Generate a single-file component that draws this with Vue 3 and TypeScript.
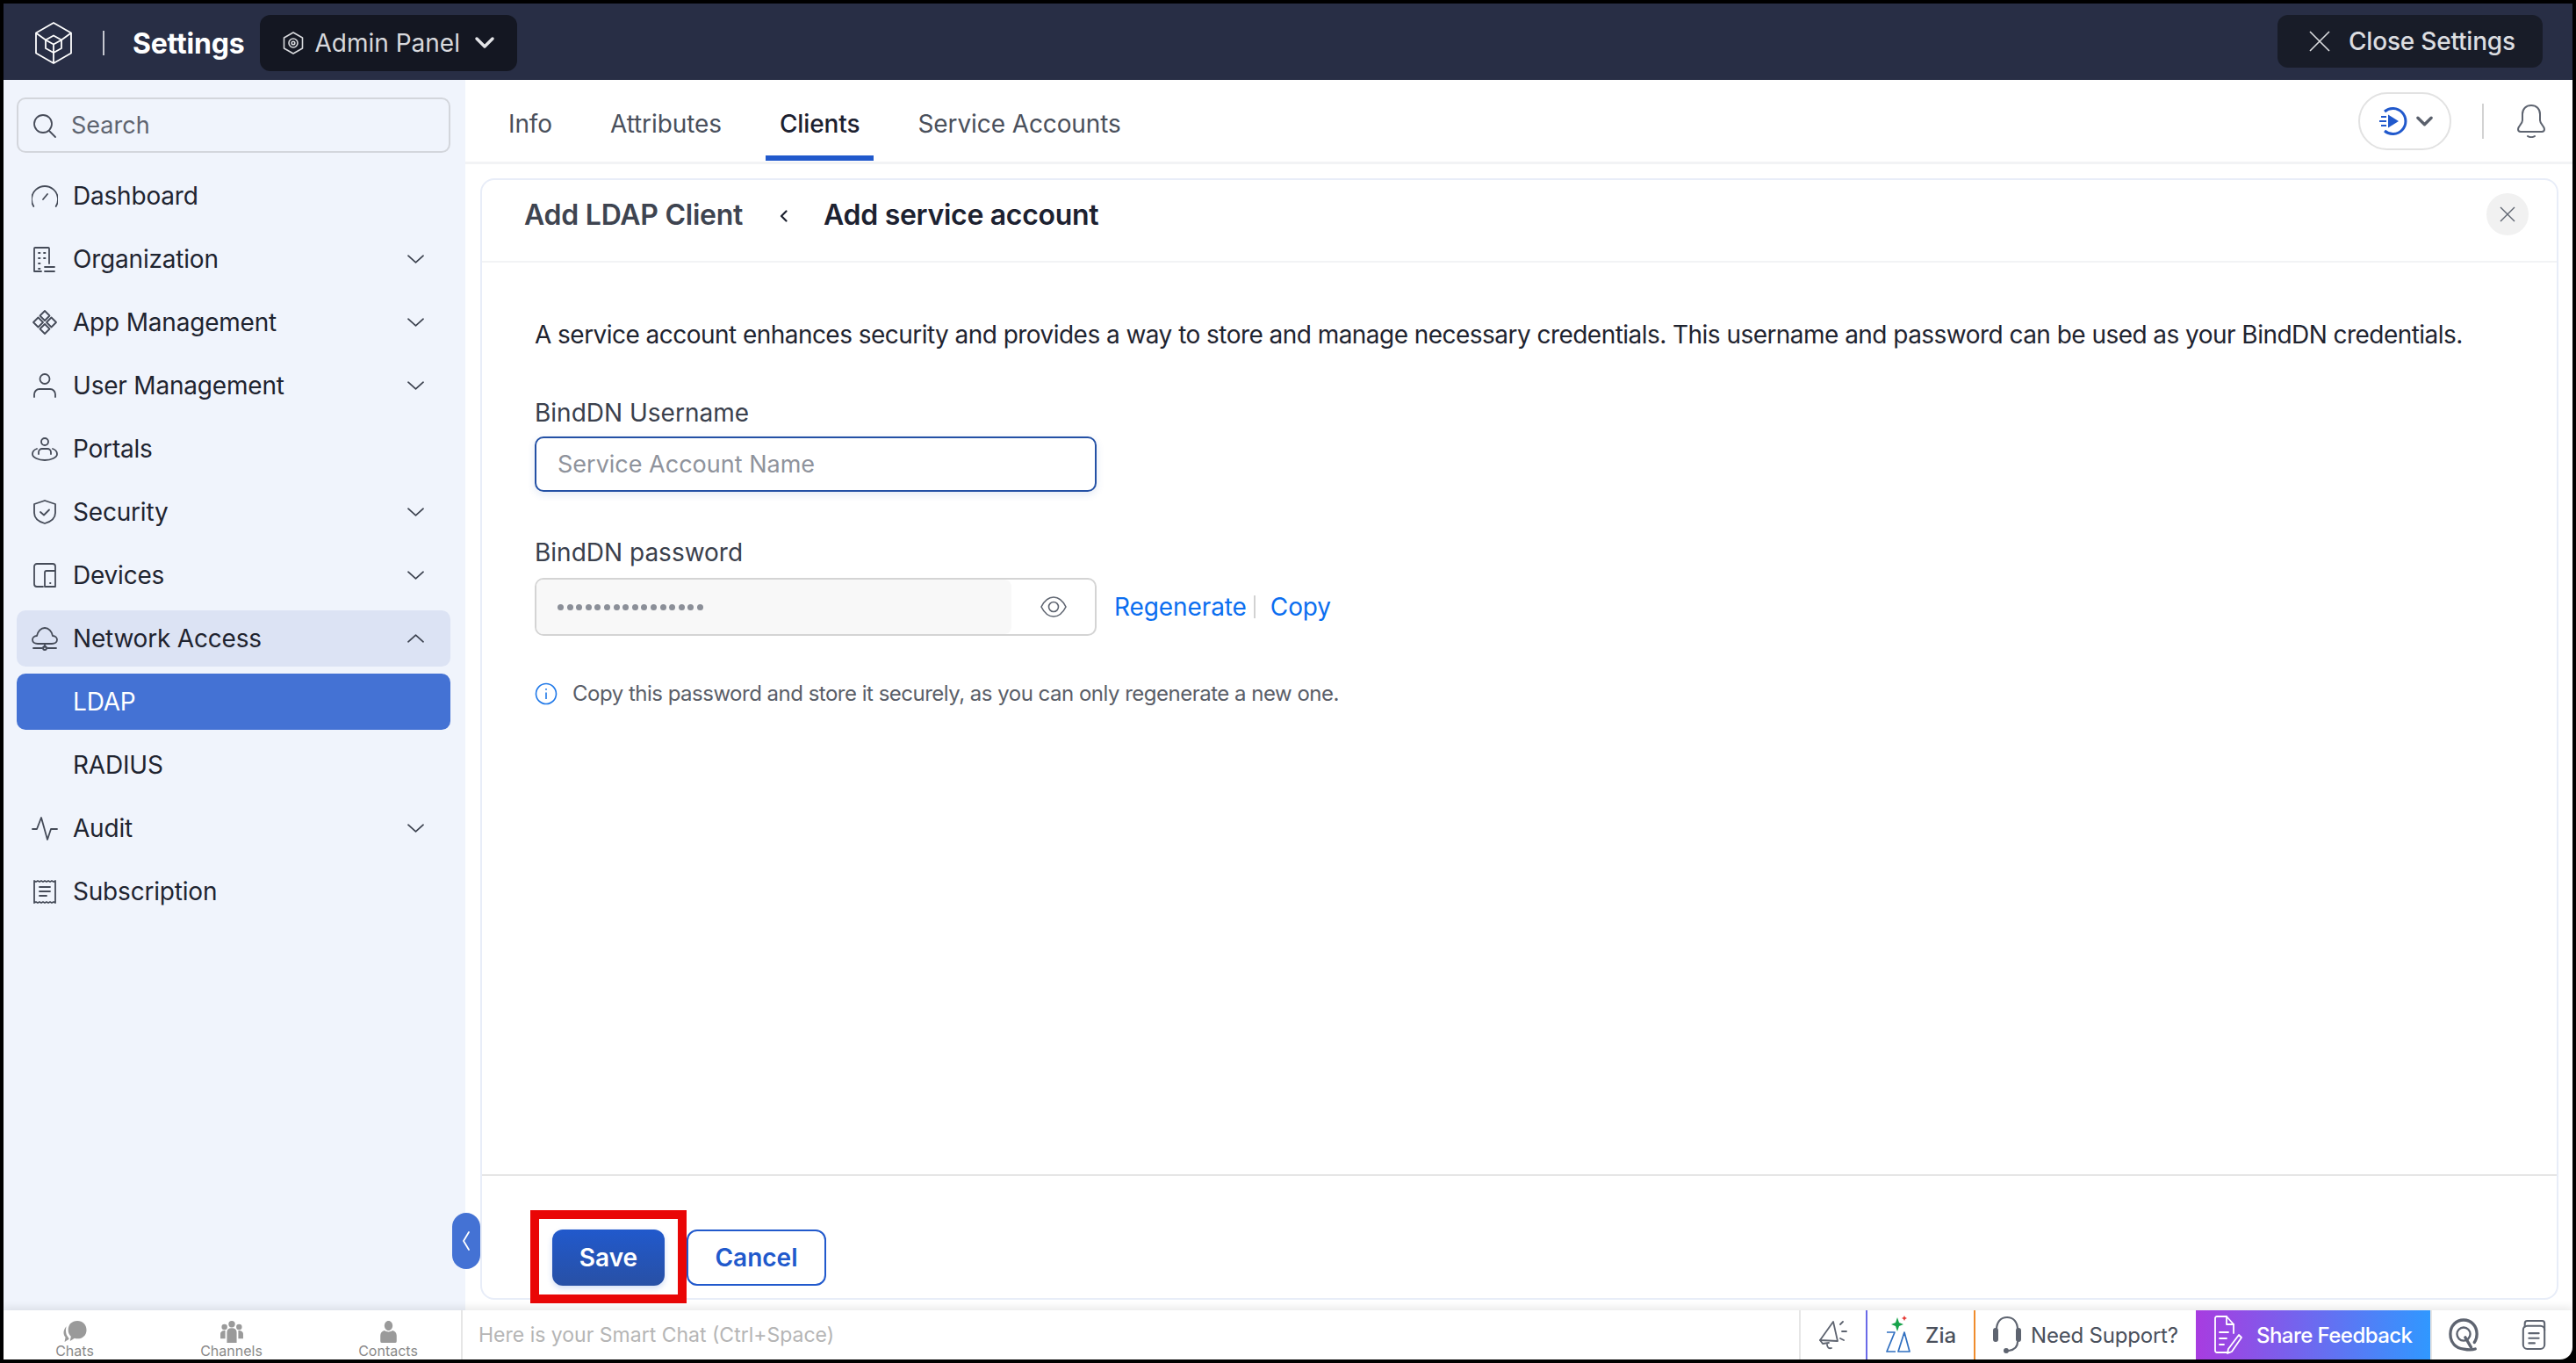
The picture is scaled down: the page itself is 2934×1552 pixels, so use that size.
<script setup lang="ts">
interface NavItem {
  label: string
  paths: string[]
  caret?: 'down' | 'up'
  open?: boolean
  active?: boolean
}

const navItems: NavItem[] = [
  { label: 'Dashboard', paths: ['M2.3 27A15 15 0 1 1 27.700 27', 'M13 19l5-6'] },
  {
    label: 'Organization',
    caret: 'down',
    paths: ['M11 29H3V3a1 1 0 0 1 1-1h15a1 1 0 0 1 1 1v17', 'M8 8h1.500M14 8h1.500M8 14h1.500M14 14h1.500M8 20h1.500M8 26h1.500', 'M15 24h11M15 29h11'],
  },
  {
    label: 'App Management',
    caret: 'down',
    paths: ['M15 2l5.500 5.500L15 13 9.500 7.500z', 'M7.500 9.500L13 15l-5.500 5.500L2 15z', 'M22.500 9.500L28 15l-5.500 5.500L17 15z', 'M15 17l5.500 5.500L15 28l-5.500-5.500z'],
  },
  {
    label: 'User Management',
    caret: 'down',
    paths: ['M15 2a5.500 5.500 0 1 0 0 11 5.500 5.500 0 0 0 0-11z', 'M3 28v-3a6 6 0 0 1 6-6h12a6 6 0 0 1 6 6v3'],
  },
  {
    label: 'Portals',
    paths: ['M15 3a4 4 0 1 0 0 8 4 4 0 0 0 0-8z', 'M8 21v-2a4 4 0 0 1 4-4h6a4 4 0 0 1 4 4v2', 'M6 15c-3 1-5 3-5 6 0 4 7 7 14 7s14-3 14-7c0-3-2-5-5-6'],
  },
  {
    label: 'Security',
    caret: 'down',
    paths: ['M15 2l12 4v10c0 6-5 10-12 12C8 26 3 22 3 16V6z', 'M10 15l4 3.500 6-6'],
  },
  {
    label: 'Devices',
    caret: 'down',
    paths: ['M13 28H6a3 3 0 0 1-3-3V5a3 3 0 0 1 3-3h18a3 3 0 0 1 3 3v4', 'M15 12a2 2 0 0 1 2-2h10v18H15z', 'M21 24h.500'],
  },
  {
    label: 'Network Access',
    caret: 'up',
    open: true,
    paths: ['M7 21c-3.500 0-6-2-6-4.500s2-4.500 5-4.500C7 7 10.500 3 15 3s8 4 9 9c3 0 5 2 5 4.500S26.500 21 23 21z', 'M15 21v4M2 26h10M18 26h10', 'M15 24a2 2 0 1 0 0 4 2 2 0 0 0 0-4z'],
  },
  { label: 'LDAP', paths: [], active: true },
  { label: 'RADIUS', paths: [] },
  { label: 'Audit', caret: 'down', paths: ['M1 16h5l5-13 7 25 4-12h7'] },
  {
    label: 'Subscription',
    paths: ['M3 3l2 1 2-1 2 1 2-1 2 1 2-1 2 1 2-1 2 1 2-1 2 1 2-1v25l-2-1-2 1-2-1-2 1-2-1-2 1-2-1-2 1-2-1-2 1-2-1-2 1z', 'M9 10h12M9 15h12M9 20h8'],
  },
]

const tabs = ['Info', 'Attributes', 'Clients', 'Service Accounts']
const dock = [
  { label: 'Chats', box: '0 1 25 24', w: 29, paths: ['M15 1C9 1 5 5 5 11c0 3 1 5 3 7l-1 5 5-3c1 .5 2 .5 3 .5 6 0 10-4 10-9.500S21 1 15 1z', 'M3 7C1 9 0 12 0 14c0 2 1 4 2 5l-1 5 5-3-1-2C2 16 2 11 3 7z'] },
  { label: 'Channels', box: '0 0 28 27', w: 26, paths: ['M14 8a4 4 0 1 0 0-8 4 4 0 0 0 0 8zM5 11a3.500 3.500 0 1 0 0-7 3.500 3.500 0 0 0 0 7zM23 11a3.500 3.500 0 1 0 0-7 3.500 3.500 0 0 0 0 7z', 'M8 27V14c0-3 2-5 6-5s6 2 6 5v13zM6 22H0v-6c0-2 2-4 5-4h1zM22 22h6v-6c0-2-2-4-5-4h-1z'] },
  { label: 'Contacts', box: '4 0 20 27', w: 23, paths: ['M14 0c3 0 5 3 5 6s-2 6-5 6-5-3-5-6 2-6 5-6z', 'M9 12c-3 1-5 3-5 6v7a2 2 0 0 0 2 2h16a2 2 0 0 0 2-2v-7c0-3-2-5-5-6-2 2-8 2-10 0z'] },
]
</script>

<template>
  <div class="app">
    <header class="topbar">
      <svg class="logo" viewBox="0 0 42 48" fill="none" stroke="#fff" stroke-width="1.800" stroke-linejoin="round">
        <path d="M21 1l20 11.500v23L21 47 1 35.500v-23z" />
        <path d="M21 15.500l9 5v9.500l-9 5-9-5v-9.500z" />
        <path d="M12 20.500l9 5 9-5M21 25.500V47M1 12.500l11 8M41 12.500l-11 8" />
      </svg>
      <span class="topbar-sep"></span>
      <span class="topbar-title">Settings</span>
      <button class="panel-switch">
        <svg class="panel-icon" viewBox="0 0 24 26" fill="none" stroke="#d8d9dd" stroke-width="1.600" stroke-linejoin="round">
          <path d="M12 1l10.500 6v12L12 25 1.500 19V7z" />
          <circle cx="12" cy="13" r="5" />
          <circle cx="12" cy="13" r="1.800" />
        </svg>
        <span>Admin Panel</span>
        <svg class="panel-caret" viewBox="0 0 24 16" fill="none" stroke="#e3e4e7" stroke-width="3.500" stroke-linecap="round" stroke-linejoin="round">
          <path d="M3 3l9 9 9-9" />
        </svg>
      </button>
      <button class="close-settings">
        <svg viewBox="0 0 24 24" fill="none" stroke="#dcdde0" stroke-width="1.600">
          <path d="M1 1l22 22M23 1L1 23" />
        </svg>
        <span>Close Settings</span>
      </button>
    </header>

    <div class="body">
      <aside class="sidebar">
        <div class="search">
          <svg viewBox="0 0 28 28" fill="none" stroke="#474c59" stroke-width="1.800" stroke-linecap="round">
            <circle cx="12" cy="12" r="10" />
            <path d="M19 20l7 7" />
          </svg>
          <span>Search</span>
        </div>
        <nav class="nav">
          <div
            v-for="item in navItems"
            :key="item.label"
            class="nav-item"
            :class="{ open: item.open, active: item.active }"
          >
            <svg class="nav-icon" viewBox="0 0 30 30" fill="none" stroke="#454b58" stroke-width="1.800" stroke-linecap="round" stroke-linejoin="round">
              <path v-for="d in item.paths" :key="d" :d="d" />
            </svg>
            <span class="nav-label">{{ item.label }}</span>
            <svg v-if="item.caret" class="nav-caret" viewBox="0 0 20 12" fill="none" stroke="#3c424f" stroke-width="1.800" stroke-linecap="round" stroke-linejoin="round">
              <path :d="item.caret === 'up' ? 'M1 10l9-8 9 8' : 'M1 2l9 8 9-8'" />
            </svg>
          </div>
        </nav>
      </aside>

      <main class="content">
        <div class="collapse-handle">
          <svg viewBox="0 0 10 26" fill="none" stroke="#fff" stroke-width="1.800" stroke-linecap="round" stroke-linejoin="round">
            <path d="M8 3L2 13l6 10" />
          </svg>
        </div>

        <div class="tabbar">
          <div class="tabs">
            <div v-for="tab in tabs" :key="tab" class="tab" :class="{ current: tab === 'Clients' }">{{ tab }}</div>
          </div>
          <div class="tabbar-tools">
            <div class="guide-pill">
              <svg class="guide-icon" viewBox="0 0 32 32" fill="none" stroke="#2159cc" stroke-width="3">
                <path d="M6 5a14.500 14.500 0 1 1 0 22" />
                <path d="M10 8.500l12 7.500-12 7.500z" fill="#2159cc" stroke="none" />
                <path d="M2 11h6M0 16h8M2 21h6" stroke-width="2" />
              </svg>
              <svg class="guide-caret" viewBox="0 0 20 12" fill="none" stroke="#5a606c" stroke-width="3.500" stroke-linecap="round" stroke-linejoin="round">
                <path d="M2 2l8 8 8-8" />
              </svg>
            </div>
            <span class="tools-sep"></span>
            <svg class="bell" viewBox="0 0 34 38" fill="none" stroke="#5e6470" stroke-width="2" stroke-linejoin="round" stroke-linecap="round">
              <path d="M17 1c-6 0-10 4-10 10v7c0 4-5 7-5 10 0 2 1 3 3 3h24c2 0 3-1 3-3 0-3-5-6-5-10v-7c0-6-4-10-10-10z" />
              <path d="M13 36c2 1.500 6 1.500 8 0" />
            </svg>
          </div>
        </div>

        <section class="card">
          <div class="card-head">
            <span class="crumb">Add LDAP Client</span>
            <svg class="crumb-arrow" viewBox="0 0 9 14" fill="none" stroke="#1c2130" stroke-width="2.200" stroke-linecap="round" stroke-linejoin="round">
              <path d="M7.500 1.500L2 7l5.500 5.500" />
            </svg>
            <span class="crumb-current">Add service account</span>
            <button class="card-close">
              <svg viewBox="0 0 18 18" fill="none" stroke="#5e6470" stroke-width="1.400">
                <path d="M1 1l16 16M17 1L1 17" />
              </svg>
            </button>
          </div>

          <div class="card-body">
            <p class="intro">A service account enhances security and provides a way to store and manage necessary credentials. This username and password can be used as your BindDN credentials.</p>

            <label class="field-label">BindDN Username</label>
            <div class="input focused">Service Account Name</div>

            <label class="field-label second">BindDN password</label>
            <div class="password-row">
              <div class="password">
                <div class="password-value">
                  <i v-for="n in 16" :key="n"></i>
                </div>
                <div class="password-eye">
                  <svg viewBox="0 0 30 24" fill="none" stroke="#5e6470" stroke-width="1.600">
                    <path d="M1 12c3-6 8-11 14-11s11 5 14 11c-3 6-8 11-14 11S4 18 1 12z" />
                    <circle cx="15" cy="12" r="5.500" />
                  </svg>
                </div>
              </div>
              <a class="link">Regenerate</a>
              <span class="link-sep"></span>
              <a class="link">Copy</a>
            </div>

            <div class="hint">
              <svg viewBox="0 0 26 26" fill="none" stroke="#1f78e8" stroke-width="1.600">
                <circle cx="13" cy="13" r="11.500" />
                <path d="M13 11.500v7.500M13 7v1.800" />
              </svg>
              <span>Copy this password and store it securely, as you can only regenerate a new one.</span>
            </div>
          </div>

          <div class="card-foot">
            <div class="save-mark">
              <button class="btn-save">Save</button>
            </div>
            <button class="btn-cancel">Cancel</button>
          </div>
        </section>
      </main>
    </div>

    <footer class="dockbar">
      <div class="dock">
        <div v-for="d in dock" :key="d.label" class="dock-item">
          <svg :viewBox="d.box" :style="{ width: d.w + 'px' }" fill="#9a9a9a">
            <path v-for="p in d.paths" :key="p" :d="p" />
          </svg>
          <span>{{ d.label }}</span>
        </div>
      </div>
      <div class="smart-chat">Here is your Smart Chat (Ctrl+Space)</div>

      <div class="cell cell-announce">
        <svg viewBox="0 0 34 36" fill="none" stroke="#5e6470" stroke-width="1.800" stroke-linejoin="round" stroke-linecap="round">
          <path d="M2 24L17 3l5 22z" />
          <path d="M2 24l3 4 7-1" />
          <path d="M10 29c0 3 2 5 5 4" />
          <path d="M25 6l3-3M27 14h5M25 22l4 2" />
        </svg>
      </div>
      <div class="cell cell-zia">
        <svg viewBox="0 0 30 44" fill="none" stroke="#2f6fc0" stroke-width="1.700" stroke-linejoin="round">
          <path d="M2 19h9L2 41h10" />
          <path d="M22 19l-7 22h13z" />
          <path d="M14 2l2 6 5 2-5 2-2 6-2-6-5-2 5-2z" fill="#17a34a" stroke="none" />
          <path d="M22 0l1 2 2 1-2 1-1 2-1-2-2-1 2-1z" fill="#e53935" stroke="none" />
        </svg>
        <span>Zia</span>
      </div>
      <div class="cell cell-support">
        <svg viewBox="0 0 32 44" fill="none" stroke="#5e6470" stroke-width="2.200" stroke-linecap="round">
          <path d="M4 16C4 7 9 2 16 2s12 5 12 14" />
          <rect x="0" y="14" width="6" height="16" rx="3" fill="#5e6470" stroke="none" />
          <rect x="26" y="14" width="6" height="16" rx="3" fill="#5e6470" stroke="none" />
          <path d="M28 30c0 6-4 9-10 10" />
          <circle cx="15" cy="40" r="3" fill="#5e6470" stroke="none" />
        </svg>
        <span>Need Support?</span>
      </div>
      <div class="cell cell-feedback">
        <svg viewBox="0 0 32 44" fill="none" stroke="#fff" stroke-width="1.800" stroke-linejoin="round" stroke-linecap="round">
          <path d="M17 42H3a2 2 0 0 1-2-2V3a2 2 0 0 1 2-2h11l8 9v10" />
          <path d="M14 1v9h8" />
          <path d="M6 19h10M6 26h8M6 33h5" />
          <path d="M28 22l3 3-11 16-5 2 1-5z" />
        </svg>
        <span>Share Feedback</span>
      </div>
      <div class="cell cell-q">
        <svg viewBox="0 0 36 40" fill="none" stroke="#5e6470" stroke-width="3.500" stroke-linecap="round">
          <path d="M32 37c-3 1-9 1-14 0C8 36 2 29 2 19 2 9 9 2 18 2s16 7 16 17c0 4-1 7-3 10" />
          <circle cx="18" cy="19" r="8" stroke-width="2.500" />
          <path d="M20 23l7 12" />
        </svg>
      </div>
      <div class="cell cell-notes">
        <svg viewBox="0 0 32 38" fill="none" stroke="#5e6470" stroke-width="2.200" stroke-linejoin="round" stroke-linecap="round">
          <path d="M5 9V5a3 3 0 0 1 3-3h18a3 3 0 0 1 3 3v8" />
          <rect x="3" y="8" width="26" height="28" rx="5" />
          <path d="M10 17h12M10 23h12M10 29h7" />
        </svg>
      </div>
    </footer>
  </div>
</template>

<style>
html,
body {
  margin: 0;
  background: #000;
}
</style>

<style scoped>
.app {
  box-sizing: border-box;
  width: 2934px;
  height: 1552px;
  padding: 4px;
  display: flex;
  flex-direction: column;
  background: #000;
  font-family: Inter, "Liberation Sans", sans-serif;
  color: #1f2430;
  overflow: hidden;
}

button {
  font-family: inherit;
  border: 0;
  padding: 0;
  cursor: pointer;
}

/* top bar */
.topbar {
  flex: none;
  height: 87px;
  box-sizing: border-box;
  display: flex;
  align-items: center;
  background: #282e45;
  padding: 3px 34px 0 36px;
}

.logo {
  width: 42px;
  height: 48px;
}

.topbar-sep {
  width: 2px;
  height: 28px;
  margin: 0 32px 0 35px;
  background: #c5c7cf;
}

.topbar-title {
  font-size: 32px;
  font-weight: 700;
  letter-spacing: -0.2px;
  color: #fff;
  margin-right: 18px;
}

.panel-switch {
  height: 64px;
  width: 293px;
  display: flex;
  align-items: center;
  background: #141722;
  border-radius: 12px;
  color: #d8d9dd;
  font-size: 28px;
  padding-left: 26px;
}

.panel-icon {
  width: 24px;
  height: 26px;
  margin-right: 12px;
}

.panel-caret {
  width: 24px;
  height: 16px;
  margin-left: 16px;
}

.close-settings {
  height: 60px;
  width: 302px;
  margin-left: auto;
  margin-top: -4px;
  display: flex;
  align-items: center;
  background: #181c28;
  border-radius: 12px;
  color: #dcdde0;
  font-size: 28px;
  font-weight: 500;
  letter-spacing: -0.2px;
  padding-left: 36px;
}

.close-settings svg {
  width: 24px;
  height: 24px;
  margin-right: 21px;
}

/* layout */
.body {
  flex: 1;
  min-height: 0;
  display: flex;
}

.sidebar {
  flex: none;
  width: 526px;
  box-sizing: border-box;
  padding: 20px 17px 0 15px;
  background: #f0f4fc;
}

.search {
  box-sizing: border-box;
  height: 63px;
  display: flex;
  align-items: center;
  border: 2px solid #d3d6dc;
  border-radius: 10px;
  padding-left: 16px;
  color: #5e6470;
  font-size: 27px;
}

.search svg {
  width: 28px;
  height: 30px;
  margin-right: 16px;
}

.nav {
  margin-top: 17px;
  display: flex;
  flex-direction: column;
  gap: 8px;
}

.nav-item {
  height: 64px;
  display: flex;
  align-items: center;
  padding: 0 30px 0 17px;
  border-radius: 10px;
  font-size: 28px;
  letter-spacing: -0.2px;
  color: #1f2430;
}

.nav-item.open {
  background: #dce3f4;
}

.nav-item.active {
  background: #4472d4;
  color: #fff;
}

.nav-icon {
  flex: none;
  width: 30px;
  height: 30px;
  margin-right: 17px;
}

.nav-label {
  flex: 1;
}

.nav-caret {
  width: 19px;
  height: 12px;
}

/* main */
.content {
  position: relative;
  flex: 1;
  min-width: 0;
  display: flex;
  flex-direction: column;
  background: #fff;
  padding-bottom: 12px;
}

.collapse-handle {
  position: absolute;
  left: -15px;
  top: 1290px;
  width: 32px;
  height: 64px;
  border-radius: 16px;
  background: #4472d4;
  display: flex;
  align-items: center;
  justify-content: center;
  z-index: 2;
}

.collapse-handle svg {
  width: 10px;
  height: 26px;
}

.tabbar {
  flex: none;
  height: 96px;
  box-sizing: border-box;
  display: flex;
  align-items: flex-end;
  justify-content: space-between;
  border-bottom: 3px solid #f2f3f5;
  padding: 0 16px 1px 33px;
}

.tabs {
  display: flex;
  gap: 34px;
}

.tab {
  height: 86px;
  box-sizing: border-box;
  padding: 8px 16px 0;
  display: flex;
  align-items: center;
  font-size: 28px;
  letter-spacing: -0.1px;
  color: #4a505c;
  border-bottom: 6px solid transparent;
}

.tab.current {
  color: #1c2130;
  font-weight: 500;
  border-bottom-color: #2159cc;
}

.tabbar-tools {
  align-self: center;
  display: flex;
  align-items: center;
  margin-top: 2px;
  padding-right: 14px;
}

.guide-pill {
  box-sizing: border-box;
  width: 106px;
  height: 66px;
  display: flex;
  align-items: center;
  padding-left: 22px;
  border: 2px solid #e2e2e2;
  border-radius: 33px;
}

.guide-icon {
  width: 32px;
  height: 32px;
  margin-right: 10px;
}

.guide-caret {
  width: 19px;
  height: 12px;
}

.tools-sep {
  width: 2px;
  height: 40px;
  margin: 0 37px 0 35px;
  background: #d2d2d2;
}

.bell {
  width: 34px;
  height: 38px;
}

.card {
  flex: 1;
  min-height: 0;
  box-sizing: border-box;
  margin: 16px 16px 0 17px;
  display: flex;
  flex-direction: column;
  border: 2px solid #e8edf8;
  border-radius: 16px;
}

.card-head {
  flex: none;
  height: 94px;
  box-sizing: border-box;
  display: flex;
  align-items: center;
  padding: 0 32px 14px 48px;
  border-bottom: 2px solid #f2f3f5;
}

.crumb {
  font-size: 32px;
  font-weight: 600;
  letter-spacing: -0.25px;
  color: #3e4450;
}

.crumb-arrow {
  width: 9px;
  height: 14px;
  margin: 4px 41px 0 42px;
}

.crumb-current {
  font-size: 32px;
  font-weight: 600;
  letter-spacing: -0.3px;
  color: #1c2130;
}

.card-close {
  margin-left: auto;
  width: 48px;
  height: 48px;
  border-radius: 50%;
  background: #f1f1f1;
  display: flex;
  align-items: center;
  justify-content: center;
}

.card-close svg {
  width: 18px;
  height: 18px;
}

.card-body {
  flex: 1;
  padding: 63px 60px 0;
  min-height: 0;
}

.intro {
  margin: 0;
  font-size: 28px;
  letter-spacing: -0.54px;
  line-height: 38px;
  color: #1f2430;
  white-space: nowrap;
}

.field-label {
  display: block;
  margin-top: 51px;
  font-size: 28px;
  line-height: 38px;
  color: #3a404c;
}

.field-label.second {
  margin-top: 50px;
}

.input {
  box-sizing: border-box;
  width: 640px;
  height: 63px;
  margin-top: 8px;
  display: flex;
  align-items: center;
  padding-left: 24px;
  border: 2px solid #2451a5;
  border-radius: 10px;
  font-size: 27px;
  color: #8f939c;
  box-shadow: 0 3px 10px rgba(36, 81, 165, 0.12);
}

.password-row {
  margin-top: 10px;
  display: flex;
  align-items: center;
}

.password {
  box-sizing: border-box;
  width: 640px;
  height: 66px;
  display: flex;
  border: 2px solid #d4d4d4;
  border-radius: 10px;
  overflow: hidden;
}

.password-value {
  flex: none;
  width: 541px;
  display: flex;
  align-items: center;
  gap: 3.600px;
  padding-left: 24px;
  background: #f8f8f8;
  border-radius: 0 8px 8px 0;
  box-sizing: border-box;
}

.password-value i {
  width: 7px;
  height: 7px;
  border-radius: 50%;
  background: #8b8f98;
}

.password-eye {
  flex: 1;
  display: flex;
  align-items: center;
  justify-content: center;
}

.password-eye svg {
  width: 30px;
  height: 24px;
}

.link {
  font-size: 28px;
  letter-spacing: -0.1px;
  color: #0b6ef0;
}

.password-row .link:first-of-type {
  margin-left: 20px;
}

.link-sep {
  width: 2px;
  height: 26px;
  margin: 0 17px 0 8px;
  background: #d2d2d2;
}

.hint {
  margin-top: 51px;
  display: flex;
  align-items: center;
  gap: 17px;
  font-size: 24px;
  letter-spacing: -0.5px;
  color: #5a5e68;
}

.hint svg {
  width: 26px;
  height: 26px;
}

.card-foot {
  flex: none;
  height: 141px;
  box-sizing: border-box;
  display: flex;
  align-items: flex-start;
  padding: 39px 0 0 55px;
  border-top: 2px solid #e6e6e6;
  position: relative;
}

.save-mark {
  flex: none;
  box-sizing: border-box;
  width: 178px;
  height: 106px;
  padding: 12px 15px 0;
  border: 10px solid #e90606;
}

.btn-save {
  width: 128px;
  height: 64px;
  border-radius: 12px;
  background: linear-gradient(180deg, #2159cc, #2850a5);
  color: #fff;
  font-size: 28px;
  font-weight: 600;
  box-shadow: 0 3px 6px rgba(33, 89, 204, 0.2);
}

.btn-cancel {
  box-sizing: border-box;
  width: 159px;
  height: 64px;
  margin-top: 22px;
  border: 2px solid #2159cc;
  border-radius: 12px;
  background: #fff;
  color: #2159cc;
  font-size: 28px;
  font-weight: 600;
}

/* bottom dock */
.dockbar {
  flex: none;
  height: 56px;
  display: flex;
  background: #fff;
  position: relative;
  box-shadow: 0 -4px 8px rgba(0, 0, 0, 0.08);
  border-bottom-right-radius: 14px;
}

.dock {
  flex: none;
  box-sizing: content-box;
  width: 500px;
  padding-left: 21px;
  display: flex;
  gap: 58.500px;
  border-right: 2px solid #e6e6e6;
}

.dock-item {
  flex: none;
  width: 120px;
  display: flex;
  flex-direction: column;
  align-items: center;
  padding-top: 12px;
  box-sizing: border-box;
  font-size: 16px;
  line-height: 18px;
  color: #8a8a8a;
}

.dock-item svg {
  height: 25px;
}

.smart-chat {
  flex: 1;
  display: flex;
  align-items: center;
  padding-left: 18px;
  font-size: 23px;
  color: #b5b5b5;
}

.cell {
  flex: none;
  box-sizing: border-box;
  display: flex;
  align-items: center;
  justify-content: center;
  font-size: 24px;
  white-space: nowrap;
  color: #4a505c;
  border-left: 2px solid #e6e6e6;
}

.cell-announce {
  width: 76px;
}

.cell-announce svg {
  width: 34px;
  height: 36px;
}

.cell-zia {
  width: 123px;
  border-left-color: #6a6ae8;
  font-weight: 500;
  justify-content: flex-start;
  padding-left: 20px;
  gap: 16px;
}

.cell-zia svg {
  width: 30px;
  height: 44px;
}

.cell-support {
  width: 253px;
  border-left-color: #f08c2c;
  justify-content: flex-start;
  padding-left: 20px;
  gap: 11px;
  letter-spacing: -0.2px;
}

.cell-support svg {
  width: 32px;
  height: 44px;
}

.cell-feedback {
  width: 267px;
  border-left: 0;
  color: #fff;
  font-weight: 500;
  letter-spacing: -0.55px;
  justify-content: flex-start;
  padding-left: 21px;
  gap: 16px;
  background: linear-gradient(90deg, #a83ce0, #3098ff);
}

.cell-feedback svg {
  width: 32px;
  height: 44px;
}

.cell-q {
  width: 74px;
}

.cell-q svg {
  width: 34px;
  height: 38px;
}

.cell-notes {
  width: 88px;
  border-left: 0;
  border-bottom-right-radius: 14px;
}

.cell-notes svg {
  width: 30px;
  height: 36px;
}
</style>
